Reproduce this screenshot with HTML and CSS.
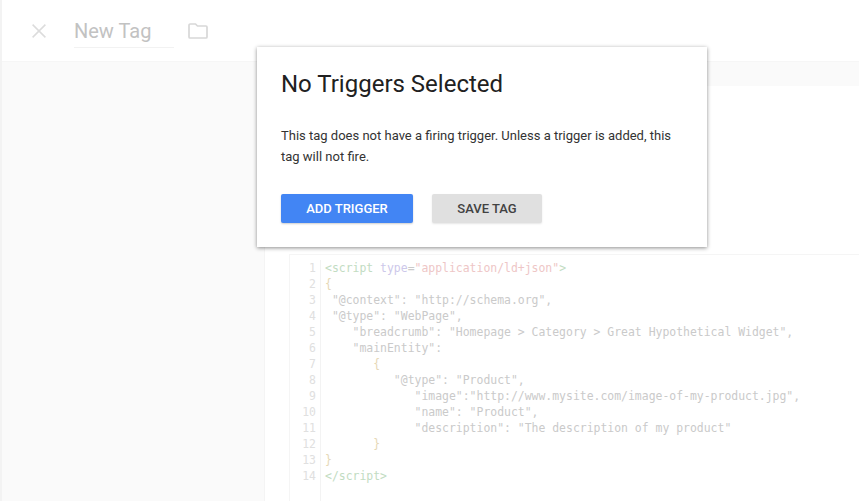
FILE: index.html
```html
<!DOCTYPE html>
<html lang="en">
<head>
<meta charset="utf-8">
<title>New Tag</title>
<link rel="stylesheet" href="styles.css">
</head>
<body>
<div class="page">
  <header class="header">
    <svg class="close" width="14" height="14" viewBox="0 0 14 14"><path d="M.6.6L13.4 13.4M13.4.6L.6 13.4" fill="none" stroke="#dcdcdc" stroke-width="1.5"/></svg>
    <div class="name">New Tag</div>
    <svg class="folder" width="20" height="16" viewBox="0 0 20 16"><path d="M1 14V2.2C1 1.5 1.5 1 2.2 1H7.5L9.5 3H18C18.6 3 19 3.5 19 4V14C19 14.6 18.6 15 18 15H2C1.4 15 1 14.6 1 14Z" fill="none" stroke="#d8d8d8" stroke-width="1.7"/></svg>
  </header>
  <div class="body">
    <aside class="side"></aside>
    <main class="main">
      <div class="band"></div>
      <div class="rule"></div>
      <div class="code">
        <ol class="gutter">
          <li>1</li><li>2</li><li>3</li><li>4</li><li>5</li><li>6</li><li>7</li><li>8</li><li>9</li><li>10</li><li>11</li><li>12</li><li>13</li><li>14</li>
        </ol>
        <pre class="source"><span class="tag">&lt;script</span> <span class="attr">type</span>=<span class="val">"application/ld+json"</span><span class="tag">&gt;</span>
<span class="brace">{</span>
 "@context": "http://schema.org",
 "@type": "WebPage",
    "breadcrumb": "Homepage &gt; Category &gt; Great Hypothetical Widget",
    "mainEntity":
       <span class="brace">{</span>
          "@type": "Product",
             "image":"http://www.mysite.com/image-of-my-product.jpg",
             "name": "Product",
             "description": "The description of my product"
       <span class="brace">}</span>
<span class="brace">}</span>
<span class="tag">&lt;/script&gt;</span></pre>
      </div>
    </main>
  </div>
  <section class="dialog">
    <h1 class="title">No Triggers Selected</h1>
    <p class="text">This tag does not have a firing trigger. Unless a trigger is added, this tag will not fire.</p>
    <div class="actions">
      <button class="btn primary">ADD TRIGGER</button>
      <button class="btn secondary">SAVE TAG</button>
    </div>
  </section>
</div>
</body>
</html>
```
FILE: styles.css
```css
* { box-sizing: border-box; }
html, body { margin: 0; height: 100%; overflow: hidden; background: #fff; }
.page {
  position: relative;
  width: 859px;
  height: 501px;
  display: flex;
  flex-direction: column;
  font-family: Roboto, "Liberation Sans", sans-serif;
  border-left: 2px solid #f3f3f3;
}
.header {
  height: 62px;
  flex: none;
  display: flex;
  align-items: center;
  padding-left: 30px;
  background: #fff;
  border-bottom: 1px solid #f6f6f6;
}
.close { flex: none; }
.name {
  margin: 3px 0 0 28px;
  width: 100px;
  height: 32px;
  font-size: 20px;
  line-height: 30px;
  color: #c2c2c2;
  border-bottom: 1px solid #f2f2f2;
}
.folder { margin-left: 14px; flex: none; }
.body { flex: 1; display: flex; min-height: 0; }
.side { width: 263px; flex: none; background: #fafafa; border-right: 1px solid #f4f4f4; }
.main { flex: 1; min-width: 0; background: #fff; display: flex; flex-direction: column; }
.band { height: 24px; flex: none; background: #fafafa; }
.rule { height: 1px; flex: none; margin-top: 168px; background: #f5f5f5; margin-left: 24px; }
.code {
  flex: 1;
  display: flex;
  margin-left: 24px;
  padding-top: 5px;
  font-family: "DejaVu Sans Mono", monospace;
  font-size: 11.45px;
  line-height: 16px;
  color: #cacaca;
  border-left: 1px solid #f5f5f5;
}
.gutter {
  list-style: none;
  margin: 0;
  padding: 0 4px 0 0;
  width: 31px;
  flex: none;
  text-align: right;
  color: #e0e0e0;
  border-right: 1px solid #f3f3f3;
}
.source { margin: 0 0 0 4px; font: inherit; white-space: pre; }
.tag { color: #c2dcc2; }
.attr { color: #cdc8ea; }
.val { color: #eec6c6; }
.brace { color: #e6d8b6; }
.dialog {
  position: absolute;
  left: 255px;
  top: 47px;
  width: 450px;
  height: 200px;
  padding: 23px 24px 24px;
  background: #fff;
  box-shadow: 0 1px 4px rgba(0,0,0,.45);
}
.title {
  margin: 0;
  font-size: 24px;
  font-weight: 400;
  line-height: 28px;
  color: #212121;
}
.text {
  margin: 27px 0 0;
  font-size: 13px;
  line-height: 21px;
  color: #333;
}
.actions { display: flex; gap: 19px; margin-top: 27px; }
.btn {
  height: 29px;
  border: 0;
  border-radius: 2px;
  padding: 0;
  font-family: Roboto, "Liberation Sans", sans-serif;
  font-size: 13px;
  font-weight: 500;
}
.primary { width: 132px; background: #4285f4; color: #fff; box-shadow: 0 1px 2px rgba(0,0,0,.2); }
.secondary { width: 110px; background: #e0e0e0; color: #424242; box-shadow: 0 1px 2px rgba(0,0,0,.1); }
```
